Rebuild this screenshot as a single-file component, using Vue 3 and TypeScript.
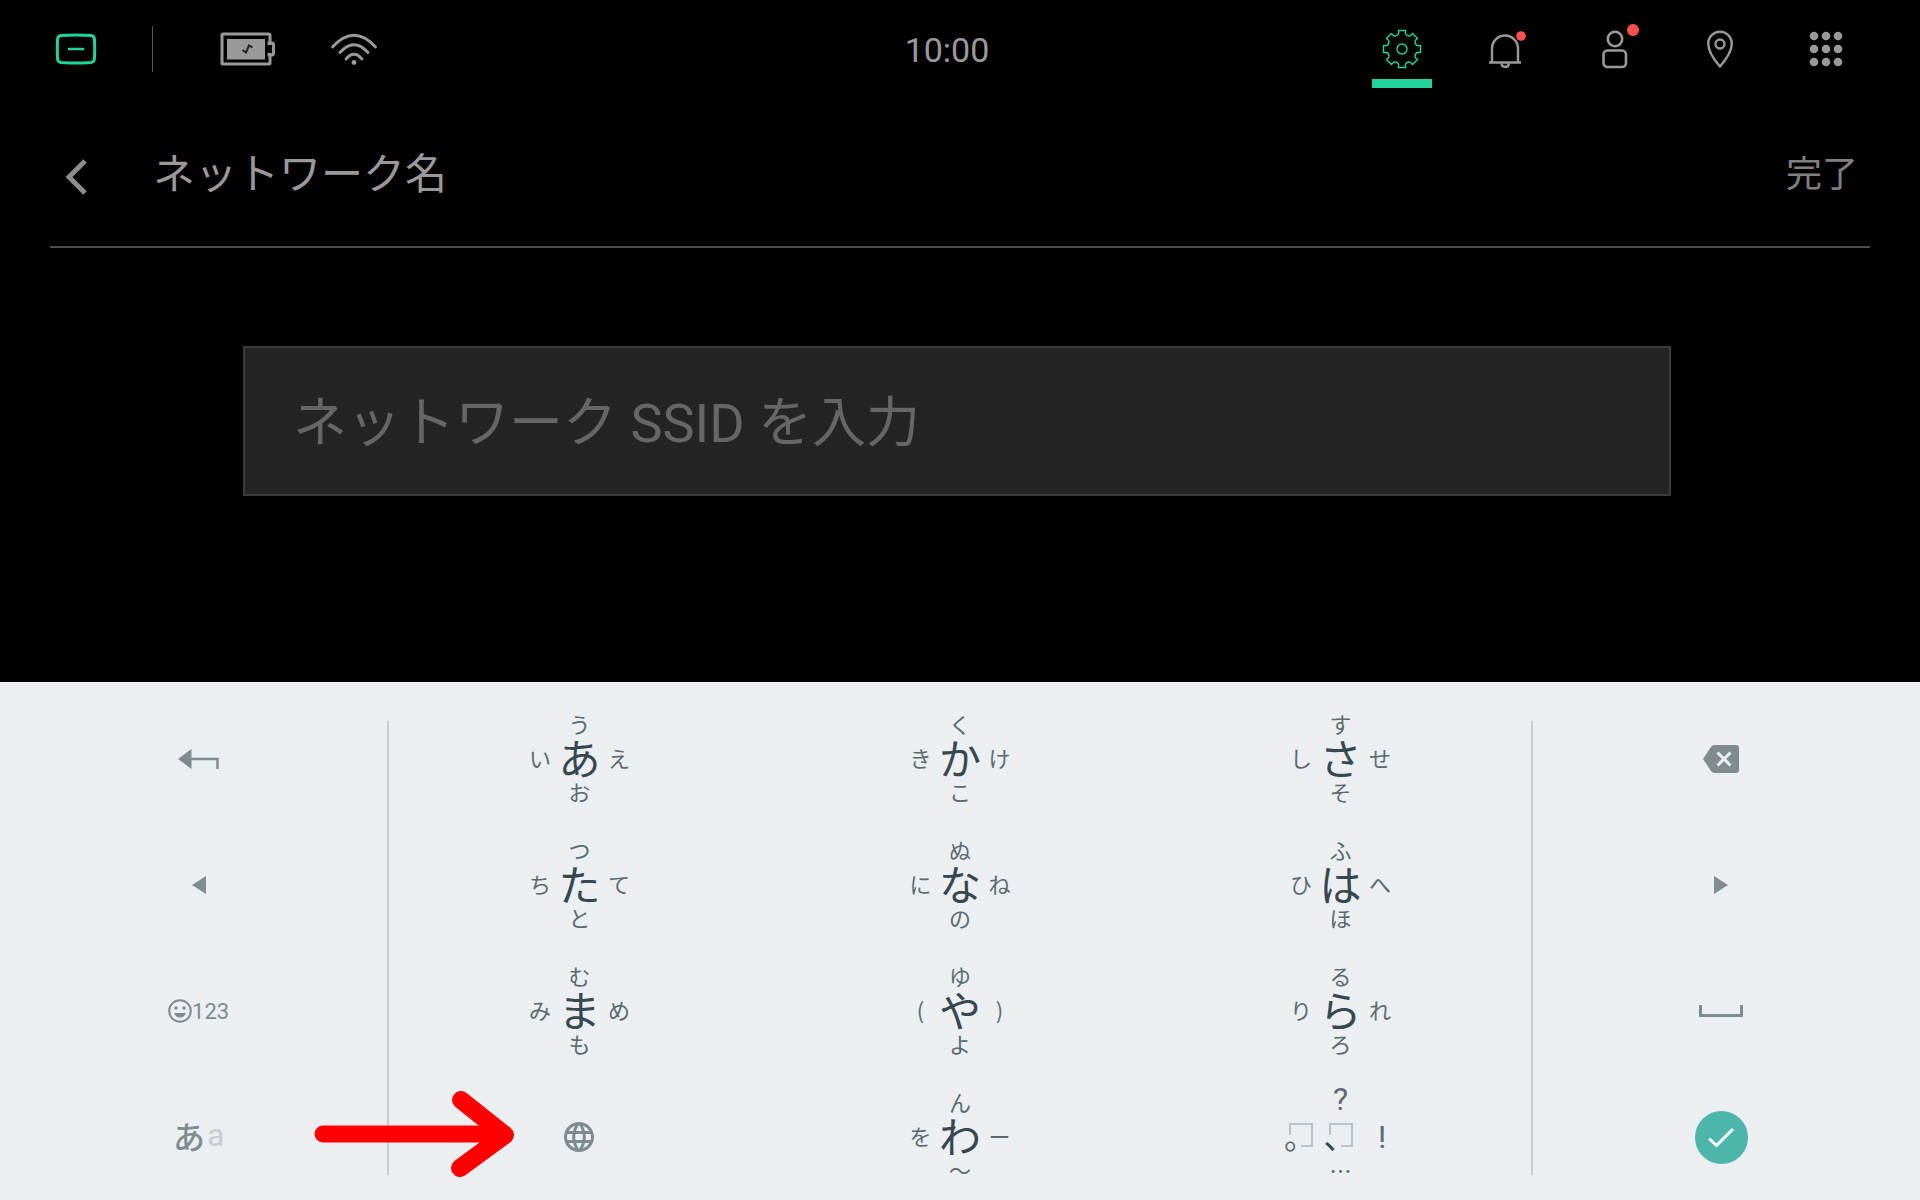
<script setup lang="ts">
import { ref } from 'vue'

interface KanaKey {
  main: string
  up: string
  left: string
  right: string
  down: string
}

const ssid = ref('')

const kanaRows: KanaKey[][] = [
  [
    { main: 'あ', up: 'う', left: 'い', right: 'え', down: 'お' },
    { main: 'か', up: 'く', left: 'き', right: 'け', down: 'こ' },
    { main: 'さ', up: 'す', left: 'し', right: 'せ', down: 'そ' },
  ],
  [
    { main: 'た', up: 'つ', left: 'ち', right: 'て', down: 'と' },
    { main: 'な', up: 'ぬ', left: 'に', right: 'ね', down: 'の' },
    { main: 'は', up: 'ふ', left: 'ひ', right: 'へ', down: 'ほ' },
  ],
  [
    { main: 'ま', up: 'む', left: 'み', right: 'め', down: 'も' },
    { main: 'や', up: 'ゆ', left: '(', right: ')', down: 'よ' },
    { main: 'ら', up: 'る', left: 'り', right: 'れ', down: 'ろ' },
  ],
]
const kanaKeys: KanaKey[] = kanaRows.flat()
const waKey: KanaKey = { main: 'わ', up: 'ん', left: 'を', right: 'ー', down: '〜' }

const dots = [5, 18, 31].flatMap((y) => [6, 18, 30].map((x) => ({ x, y })))

// Outline of an eight-toothed cog centred on (20, 20)
function cogPath(): string {
  const at = (radius: number, degrees: number): string => {
    const a = (degrees * Math.PI) / 180
    return `${(20 + radius * Math.sin(a)).toFixed(1)} ${(20 - radius * Math.cos(a)).toFixed(1)}`
  }
  let d = ''
  for (let i = 0; i < 8; i++) {
    const c = i * 45
    d += `${i === 0 ? 'M' : 'L'}${at(15.4, c - 14)}L${at(16, c - 12)}L${at(18.8, c - 11)}L${at(18.8, c + 11)}L${at(16, c + 12)}L${at(15.4, c + 14)}Q${at(13.6, c + 22.5)} ${at(15.4, c + 31)}`
  }
  return d + 'Z'
}
const cog = cogPath()
</script>

<template>
  <div class="screen">
    <header class="topbar">
      <div class="status">
        <button class="icon-button" type="button" aria-label="Hub">
          <svg width="42" height="32" viewBox="0 0 42 32" fill="none" stroke="#22d49c" stroke-width="3" stroke-linecap="round">
            <path d="M6 2.600Q21 1.400 36 2.600Q39.200 3 39.400 6Q40 16 39.400 26Q39.200 29 36 29.400Q21 30.600 6 29.400Q2.800 29 2.600 26Q2 16 2.600 6Q2.800 3 6 2.600Z" />
            <path d="M14 16H28" stroke-width="2.600" />
          </svg>
        </button>
        <span class="divider"></span>
        <svg class="battery" width="56" height="34" viewBox="0 0 56 34" fill="none">
          <path d="M50 13V3Q50 2 49 2H3Q2 2 2 3V31Q2 32 3 32H49Q50 32 50 31V21M49 21V23H52Q53.500 23 53.500 21.500V12.500Q53.500 11 52 11H49V13" stroke="#999" stroke-width="3" />
          <rect x="7" y="7" width="38" height="20.500" fill="#999" />
          <path d="M22.500 18L26 20.500L29 13.500L32.500 15.500" stroke="#222" stroke-width="2" />
        </svg>
        <svg class="wifi" width="48" height="34" viewBox="0 0 48 34" fill="none" stroke="#999" stroke-width="2.800" stroke-linecap="round">
          <path d="M2.500 15Q24-8.500 45.500 15" />
          <path d="M10 20.500Q24 5 38 20.500" />
          <path d="M16 27Q24 17.500 32 27" />
          <circle cx="24" cy="30.500" r="2.400" fill="#999" stroke="none" />
        </svg>
      </div>
      <time class="clock">10:00</time>
      <nav class="actions">
        <button class="icon-button active" type="button" aria-label="設定">
          <svg width="40" height="40" viewBox="0 0 40 40" fill="none" stroke="#22d49c" stroke-width="1.400" stroke-linejoin="round">
            <path :d="cog" />
            <circle cx="20" cy="20" r="5" />
          </svg>
        </button>
        <button class="icon-button" type="button" aria-label="通知">
          <svg width="40" height="40" viewBox="0 0 40 40" fill="none" stroke="#999" stroke-width="2.400">
            <path d="M4 33.500V19.500A13 13 0 0 1 30 19.500V33.500M1 33.500H33" />
            <path d="M13.500 34.500Q13.800 38 17.200 38Q20.600 38 21 34.500" />
            <circle cx="33" cy="7" r="4.800" fill="#ff5050" stroke="none" />
          </svg>
        </button>
        <button class="icon-button" type="button" aria-label="アカウント">
          <svg width="52" height="52" viewBox="0 0 52 52" fill="none" stroke="#999" stroke-width="2.600">
            <circle cx="27" cy="16" r="7.200" />
            <rect x="15.500" y="27.500" width="22.500" height="16.500" rx="4" />
            <circle cx="45" cy="7" r="6" fill="#ff5050" stroke="none" />
          </svg>
        </button>
        <button class="icon-button" type="button" aria-label="位置情報">
          <svg width="28" height="38" viewBox="0 0 28 38" fill="none" stroke="#999" stroke-width="2.400" stroke-linejoin="round">
            <path d="M14 36.500Q2.200 23 2.200 13.500A11.800 11.800 0 0 1 25.800 13.500Q25.800 23 14 36.500Z" />
            <circle cx="14" cy="14" r="4.500" />
          </svg>
        </button>
        <button class="icon-button" type="button" aria-label="アプリ">
          <svg width="36" height="36" viewBox="0 0 36 36" fill="#999">
            <circle v-for="(dot, i) in dots" :key="i" :cx="dot.x" :cy="dot.y" r="4.300" />
          </svg>
        </button>
      </nav>
    </header>

    <main>
      <div class="title-row">
        <button class="back" type="button" aria-label="戻る">
          <svg width="24" height="36" viewBox="0 0 24 36" fill="none" stroke="#8c8c8c" stroke-width="5">
            <path d="M21 2L5 18L21 34" />
          </svg>
        </button>
        <h1>ネットワーク名</h1>
        <button class="done" type="button">完了</button>
      </div>
      <div class="field">
        <input v-model="ssid" type="text" aria-label="ネットワーク名" placeholder="ネットワーク SSID を入力" />
      </div>
    </main>

    <section class="keyboard" aria-label="キーボード">
      <div class="side">
        <button class="key" type="button" aria-label="戻す">
          <svg width="41" height="20" viewBox="0 0 41 20">
            <path d="M0 10L13.500 0V20Z" fill="#808b8d" />
            <path d="M13 10H39.500V20" fill="none" stroke="#808b8d" stroke-width="2.500" />
          </svg>
        </button>
        <button class="key" type="button" aria-label="左へ">
          <svg width="14" height="18" viewBox="0 0 14 18" fill="#808b8d"><path d="M0 9L14 0V18Z" /></svg>
        </button>
        <button class="key symbols" type="button">
          <svg width="24" height="24" viewBox="0 0 24 24" fill="#808b8d">
            <circle cx="12" cy="12" r="10.800" fill="none" stroke="#808b8d" stroke-width="2" />
            <circle cx="8" cy="9" r="1.800" />
            <circle cx="16" cy="9" r="1.800" />
            <path d="M6 14H18Q16 18.500 12 18.500Q8 18.500 6 14Z" />
          </svg>
          <span>123</span>
        </button>
        <button class="key mode" type="button"><span>あ</span><span class="latin">a</span></button>
      </div>

      <span class="rule"></span>

      <div class="kana">
        <button v-for="k in kanaKeys" :key="k.main" class="key" type="button">
          <span class="flick">
            <span class="up">{{ k.up }}</span>
            <span class="left">{{ k.left }}</span>
            <span class="main">{{ k.main }}</span>
            <span class="right">{{ k.right }}</span>
            <span class="down">{{ k.down }}</span>
          </span>
        </button>
        <button class="key globe" type="button" aria-label="言語">
          <svg width="30" height="30" viewBox="2 2 20 20" fill="#808b8d">
            <path d="M11.990 2C6.470 2 2 6.480 2 12s4.470 10 9.990 10C17.520 22 22 17.520 22 12S17.520 2 11.990 2zm6.930 6h-2.950a15.650 15.650 0 0 0-1.380-3.560A8.030 8.030 0 0 1 18.920 8zM12 4.040c.83 1.200 1.480 2.530 1.910 3.960h-3.820c.43-1.430 1.080-2.760 1.910-3.960zM4.260 14C4.100 13.360 4 12.690 4 12s.1-1.360.26-2h3.380c-.08.66-.14 1.320-.14 2s.06 1.340.14 2H4.260zm.82 2h2.950c.32 1.250.78 2.450 1.380 3.560A7.987 7.987 0 0 1 5.080 16zm2.950-8H5.080a7.987 7.987 0 0 1 4.330-3.560A15.650 15.650 0 0 0 8.030 8zM12 19.960c-.83-1.200-1.480-2.530-1.910-3.960h3.820c-.43 1.430-1.080 2.760-1.910 3.960zM14.340 14H9.660c-.09-.66-.16-1.320-.16-2s.07-1.350.16-2h4.680c.09.650.16 1.320.16 2s-.07 1.340-.16 2zm.25 5.560c.6-1.110 1.060-2.310 1.380-3.560h2.950a8.030 8.030 0 0 1-4.330 3.560zM16.360 14c.08-.66.14-1.320.14-2s-.06-1.340-.14-2h3.380c.16.640.26 1.310.26 2s-.1 1.360-.26 2h-3.380z" />
          </svg>
          <svg class="pointer" width="202" height="88" viewBox="0 0 202 88" fill="none" stroke="#f00" stroke-linecap="round" stroke-linejoin="round">
            <path d="M10 44H188" stroke-width="17" />
            <path d="M148 10L192 45L147 78" stroke-width="18" />
          </svg>
        </button>
        <button class="key" type="button">
          <span class="flick">
            <span class="up">{{ waKey.up }}</span>
            <span class="left">{{ waKey.left }}</span>
            <span class="main">{{ waKey.main }}</span>
            <span class="right">{{ waKey.right }}</span>
            <span class="down">{{ waKey.down }}</span>
          </span>
        </button>
        <button class="key" type="button">
          <span class="flick punct">
            <span class="up">?</span>
            <span class="left boxed">
              <svg width="24" height="24" viewBox="0 0 24 24"><path d="M1 12V1H23V23H12" /></svg>
              <span>。</span>
            </span>
            <span class="main boxed">
              <svg width="24" height="24" viewBox="0 0 24 24"><path d="M1 12V1H23V23H12" /></svg>
              <span>、</span>
            </span>
            <span class="right">!</span>
            <span class="down">…</span>
          </span>
        </button>
      </div>

      <span class="rule"></span>

      <div class="side">
        <button class="key" type="button" aria-label="削除">
          <svg width="36" height="28" viewBox="0 0 36 28">
            <path d="M0 14L8 2Q9.500 0 11.500 0H33Q36 0 36 3V25Q36 28 33 28H11.500Q9.500 28 8 26Z" fill="#808b8d" />
            <path d="M14.500 7.500L27.500 20.500M27.500 7.500L14.500 20.500" fill="none" stroke="#ebeff2" stroke-width="3" />
          </svg>
        </button>
        <button class="key" type="button" aria-label="右へ">
          <svg width="14" height="18" viewBox="0 0 14 18" fill="#808b8d"><path d="M14 9L0 0V18Z" /></svg>
        </button>
        <button class="key" type="button" aria-label="スペース">
          <svg width="44" height="12" viewBox="0 0 44 12" fill="none" stroke="#808b8d" stroke-width="3"><path d="M1.500 0V10.500H42.500V0" /></svg>
        </button>
        <button class="key" type="button" aria-label="確定">
          <span class="enter">
            <svg width="28" height="22" viewBox="0 0 28 22" fill="none" stroke="#fff" stroke-width="3"><path d="M2 12.500L9.500 19.500L26 3" /></svg>
          </span>
        </button>
      </div>
    </section>
  </div>
</template>

<style>
body {
  margin: 0;
  background: #000;
}
</style>

<style scoped>
.screen {
  display: flex;
  flex-direction: column;
  min-height: 100vh;
  background: #000;
  color: #999;
  font-family: Roboto, 'Noto Sans CJK JP', sans-serif;
}

button {
  padding: 0;
  border: 0;
  background: none;
  color: inherit;
  font: inherit;
}

svg {
  display: block;
  flex: none;
}

.topbar {
  display: grid;
  grid-template-columns: 1fr auto 1fr;
  align-items: center;
  height: 98px;
  padding: 0 64px 0 38px;
}

.status,
.actions {
  display: flex;
  align-items: center;
}

.status {
  padding-left: 8px;
}

.actions {
  justify-content: flex-end;
  gap: 46px;
}

.divider {
  width: 1px;
  height: 46px;
  margin-left: 46px;
  background: #555;
}

.battery {
  margin-left: 67px;
}

.wifi {
  margin-left: 54px;
}

.clock {
  padding-top: 2px;
  font-size: 34px;
  line-height: 40px;
}

.icon-button {
  display: flex;
  align-items: center;
  justify-content: center;
  width: 60px;
  height: 60px;
}

.active {
  position: relative;
}

.active::after {
  content: '';
  position: absolute;
  top: 60px;
  left: 0;
  width: 60px;
  height: 9px;
  background: #22d49c;
}

.title-row {
  display: flex;
  align-items: center;
  height: 148px;
  margin: 0 50px;
  border-bottom: 2px solid #4d4d4d;
}

.back {
  display: flex;
  align-items: center;
  justify-content: center;
  width: 52px;
  height: 60px;
  padding-top: 10px;
}

h1 {
  flex: 1;
  margin: 0 0 0 51px;
  padding-top: 6px;
  font-size: 42px;
  font-weight: 400;
  line-height: 60px;
}

.done {
  margin-right: 12px;
  padding-top: 6px;
  color: #808080;
  font-size: 36px;
  line-height: 60px;
}

.field {
  margin: 98px 249px 0 243px;
}

input {
  box-sizing: border-box;
  display: block;
  width: 100%;
  height: 150px;
  padding: 4px 48px 0;
  border: 2px solid #3b3b3b;
  border-radius: 0;
  background: #242424;
  color: #ccc;
  font-family: inherit;
  font-size: 54px;
}

input::placeholder {
  color: #666;
  opacity: 1;
}

.keyboard {
  display: grid;
  grid-template-columns: 377fr 2px 1141fr 2px 377fr;
  margin-top: auto;
  padding: 14px 10px 0;
  background: #ebeff2;
  color: #808b8d;
}

.side {
  display: grid;
  grid-auto-rows: 126px;
}

.kana {
  display: grid;
  grid-template-columns: repeat(3, 1fr);
  grid-auto-rows: 126px;
}

.rule {
  margin: 25px 0;
  background: #c8cdd0;
}

.key {
  display: flex;
  align-items: center;
  justify-content: center;
}

.flick {
  display: grid;
  grid-template-areas:
    '. up .'
    'left main right'
    '. down .';
  grid-template-columns: 24px 55px 24px;
  grid-template-rows: 24px 44px 24px;
  place-items: center;
  padding-bottom: 4px;
  color: #5c6a6d;
  font-family: 'Noto Sans CJK JP', sans-serif;
  font-size: 22px;
  line-height: 24px;
}

.up {
  grid-area: up;
}

.left {
  grid-area: left;
}

.main {
  grid-area: main;
  color: #37474f;
  font-size: 42px;
  line-height: 44px;
}

.right {
  grid-area: right;
}

.down {
  grid-area: down;
}

.punct .up,
.punct .right {
  font-family: Roboto, sans-serif;
  font-size: 32px;
}

.punct .up {
  padding-bottom: 4px;
}

.punct .right {
  padding: 4px 0 0 4px;
}

.boxed {
  position: relative;
  width: 24px;
  height: 24px;
}

.boxed path {
  fill: none;
  stroke: #bcc2c5;
  stroke-width: 2;
}

.boxed span {
  position: absolute;
  left: -5px;
  bottom: -4px;
  font-size: 32px;
  line-height: 32px;
}

.globe {
  position: relative;
}

.pointer {
  position: absolute;
  right: calc(50% + 64px);
  top: 16px;
}

.symbols {
  font-size: 22px;
}

.mode {
  gap: 2px;
  padding-bottom: 4px;
  font-size: 32px;
  font-weight: 500;
}

.latin {
  color: #c8cdd0;
  font-weight: 400;
}

.enter {
  display: flex;
  align-items: center;
  justify-content: center;
  width: 53px;
  height: 53px;
  border-radius: 50%;
  background: #4db6ac;
}
</style>
